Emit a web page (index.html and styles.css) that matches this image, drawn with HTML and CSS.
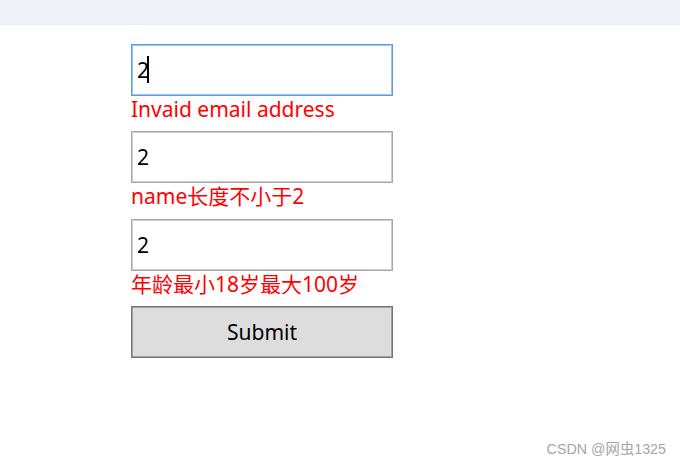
FILE: index.html
```html
<!DOCTYPE html>
<html>
<head>
<meta charset="utf-8">
<link rel="stylesheet" href="styles.css">
</head>
<body>
<div class="topbar"></div>
<form class="form">
  <div class="field">
    <div class="input-wrap">
      <input class="input input-focus" type="text" value="2">
      <span class="caret"></span>
    </div>
    <div class="error">Invaid email address</div>
  </div>
  <div class="field">
    <input class="input" type="text" value="2">
    <div class="error">name长度不小于2</div>
  </div>
  <div class="field">
    <input class="input" type="text" value="2">
    <div class="error">年龄最小18岁最大100岁</div>
  </div>
  <button class="submit" type="button">Submit</button>
</form>
<div class="watermark">CSDN @网虫1325</div>
</body>
</html>
```
FILE: styles.css
```css
html, body {
  margin: 0;
  padding: 0;
  background: #ffffff;
  font-family: "Noto Sans", "Noto Sans CJK SC", sans-serif;
}
.topbar {
  height: 25px;
  background: #eff2f7;
  border-bottom: 1px solid #e6ecf4;
  box-sizing: border-box;
}
.form {
  display: flex;
  flex-direction: column;
  padding: 19px 0 0 131px;
}
.field {
  display: flex;
  flex-direction: column;
}
.input-wrap {
  position: relative;
  width: 262px;
  height: 52px;
}
.input {
  width: 262px;
  height: 52px;
  box-sizing: border-box;
  border: 1px solid #a9a9a9;
  box-shadow: inset 0 0 0 1px #cfcfcf;
  padding: 0 5px;
  margin: 0;
  font-family: "Noto Sans", "Noto Sans CJK SC", sans-serif;
  font-size: 21px;
  color: #000;
  background: #fff;
  outline: none;
}
.input-focus {
  border-color: #5b9be8;
  box-shadow: inset 0 0 0 1px #9cc3f2;
}
.caret {
  position: absolute;
  left: 16px;
  top: 12px;
  width: 2px;
  height: 27px;
  background: #000;
}
.error {
  color: #ff0000;
  font-size: 21px;
  line-height: 27px;
  margin-bottom: 8.3px;
  white-space: nowrap;
}
.submit {
  width: 262px;
  height: 52px;
  box-sizing: border-box;
  border: 1px solid #767676;
  box-shadow: inset 0 0 0 1px #a0a0a0;
  background: #dddddd;
  font-family: "Noto Sans", "Noto Sans CJK SC", sans-serif;
  font-size: 21px;
  color: #000;
  padding: 0;
  margin: 0;
}
.watermark {
  position: absolute;
  right: 14px;
  bottom: 8px;
  font-family: "Liberation Sans", "Noto Sans CJK SC", sans-serif;
  font-size: 14.3px;
  color: #a6a6a6;
  white-space: nowrap;
}
```
